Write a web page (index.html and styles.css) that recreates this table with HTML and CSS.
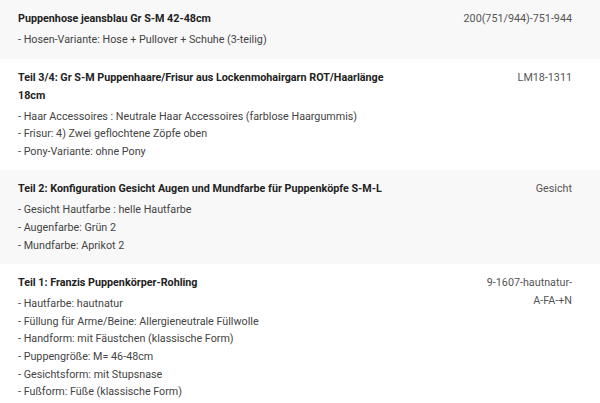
FILE: index.html
```html
<!DOCTYPE html>
<html lang="de">
<head>
<meta charset="utf-8">
<title>Bestellpositionen</title>
<link rel="stylesheet" href="styles.css">
</head>
<body>
<div class="list">
  <div class="row alt">
    <div class="item">
      <div class="title">Puppenhose jeansblau Gr S-M 42-48cm</div>
      <ul class="opts">
        <li>- Hosen-Variante: Hose + Pullover + Schuhe (3-teilig)</li>
      </ul>
    </div>
    <div class="sku nowrap">200(751/944)-751-944</div>
  </div>
  <div class="row">
    <div class="item">
      <div class="title">Teil 3/4: Gr S-M Puppenhaare/Frisur aus Lockenmohairgarn ROT/Haarlänge 18cm</div>
      <ul class="opts">
        <li>- Haar Accessoires : Neutrale Haar Accessoires (farblose Haargummis)</li>
        <li>- Frisur: 4) Zwei geflochtene Zöpfe oben</li>
        <li>- Pony-Variante: ohne Pony</li>
      </ul>
    </div>
    <div class="sku">LM18-1311</div>
  </div>
  <div class="row alt">
    <div class="item">
      <div class="title">Teil 2: Konfiguration Gesicht Augen und Mundfarbe für Puppenköpfe S-M-L</div>
      <ul class="opts">
        <li>- Gesicht Hautfarbe : helle Hautfarbe</li>
        <li>- Augenfarbe: Grün 2</li>
        <li>- Mundfarbe: Aprikot 2</li>
      </ul>
    </div>
    <div class="sku">Gesicht</div>
  </div>
  <div class="row">
    <div class="item">
      <div class="title">Teil 1: Franzis Puppenkörper-Rohling</div>
      <ul class="opts">
        <li>- Hautfarbe: hautnatur</li>
        <li>- Füllung für Arme/Beine: Allergieneutrale Füllwolle</li>
        <li>- Handform: mit Fäustchen (klassische Form)</li>
        <li>- Puppengröße: M= 46-48cm</li>
        <li>- Gesichtsform: mit Stupsnase</li>
        <li>- Fußform: Füße (klassische Form)</li>
      </ul>
    </div>
    <div class="sku">9-1607-hautnatur-A-FA-+N</div>
  </div>
</div>
</body>
</html>
```
FILE: styles.css
```css
html, body {
  margin: 0;
  padding: 0;
  background: #ffffff;
}
body {
  font-family: Roboto, "Liberation Sans", sans-serif;
  font-size: 10.75px;
  line-height: 18px;
  color: #444444;
}
.list {
  display: flex;
  flex-direction: column;
}
.row {
  display: grid;
  grid-template-columns: 368px 1fr;
  padding: 10px 28px 10px 18px;
  background: #ffffff;
}
.row.alt {
  background: #f8f8f8;
}
.title {
  font-weight: 700;
  color: #222222;
  margin-bottom: 3px;
}
.opts {
  list-style: none;
  margin: 0;
  padding: 0;
}
.opts li {
  line-height: 17.6px;
}
.sku {
  justify-self: end;
  width: fit-content;
  max-width: 92px;
  min-width: min-content;
  text-align: right;
  color: #555555;
}
.sku.nowrap {
  white-space: nowrap;
  max-width: none;
}
```
